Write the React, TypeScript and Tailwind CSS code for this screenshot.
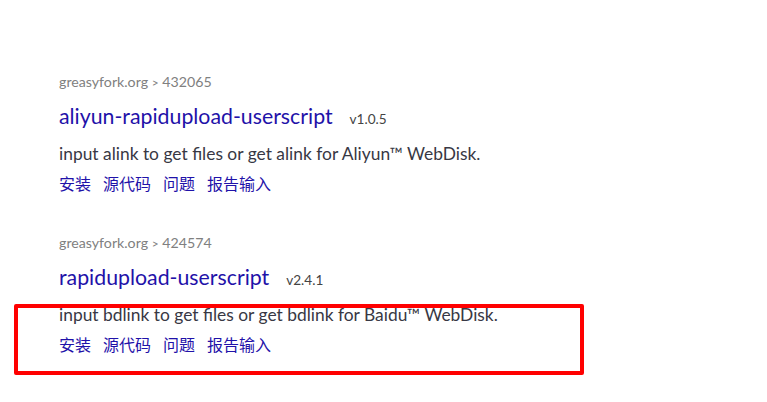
import React from "react";

type Item = { id: string; name: string; version: string; desc: string };

const items: Item[] = [
  {
    id: "432065",
    name: "aliyun-rapidupload-userscript",
    version: "v1.0.5",
    desc: "input alink to get files or get alink for Aliyun™ WebDisk.",
  },
  {
    id: "424574",
    name: "rapidupload-userscript",
    version: "v2.4.1",
    desc: "input bdlink to get files or get bdlink for Baidu™ WebDisk.",
  },
];

const font = { fontFamily: "Lato, 'Noto Sans CJK SC', sans-serif" };

export default function App() {
  return (
    <div
      className="relative w-[767px] h-[402px] bg-white overflow-hidden"
      style={font}
    >
      <div className="flex flex-col gap-[38px] pl-[59px] pt-[72px]">
        {items.map((it) => (
          <div key={it.id} className="flex flex-col">
            <div className="text-[14.2px] leading-[20px] text-[#808080]">
              greasyfork.org <span className="text-[12px]">&gt;</span> {it.id}
            </div>
            <div className="flex items-baseline mt-[8px]">
              <span className="text-[21.3px] leading-[30px] text-[#1f12a9]">
                {it.name}
              </span>
              <span className="ml-[17px] text-[13.6px] text-[#444]">
                {it.version}
              </span>
            </div>
            <div className="text-[17.4px] leading-[24px] text-[#383844] mt-[11px]">
              {it.desc}
            </div>
            <div className="flex gap-[12px] text-[16px] leading-[22px] text-[#1f12a9] mt-[7px]">
              <span>安装</span>
              <span>源代码</span>
              <span>问题</span>
              <span>报告输入</span>
            </div>
          </div>
        ))}
      </div>
      <div className="absolute left-[14px] top-[304px] w-[570px] h-[71px] border-[4px] border-[#ff0000] rounded-[2px]" />
    </div>
  );
}
